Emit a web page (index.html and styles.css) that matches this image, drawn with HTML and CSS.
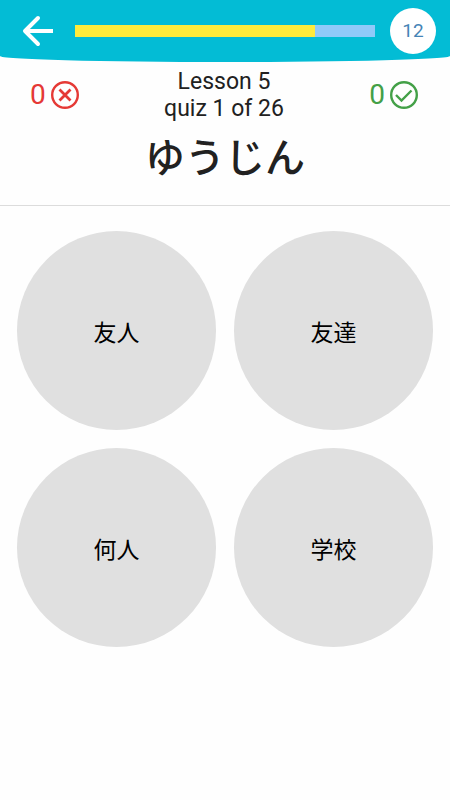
FILE: index.html
```html
<!DOCTYPE html>
<html lang="en">
<head>
    <meta charset="UTF-8">
    <meta name="viewport" content="width=device-width, initial-scale=1.0">
    <title>Lesson 5 Quiz</title>
    <link rel="stylesheet" href="styles.css">
</head>
<body>
    <header class="top-bar">
        <button class="back" type="button" aria-label="Back">
            <svg viewBox="0 0 34 34" width="34" height="34">
                <path stroke-linecap="butt" d="M31 17H3" />
                <path d="M16 4L3 17l13 13" />
            </svg>
        </button>
        <div class="progress" role="progressbar" aria-label="Time left" aria-valuenow="12" aria-valuemin="0" aria-valuemax="15">
            <div class="progress-fill" style="width: 80%"></div>
        </div>
        <div class="timer">12</div>
    </header>

    <section class="question">
        <div class="status">
            <div class="score wrong">
                <span>0</span>
                <svg viewBox="0 0 28 28" width="28" height="28">
                    <circle cx="14" cy="14" r="12.8" />
                    <path class="cross" d="M8.500 8.500l11 11M19.500 8.500l-11 11" />
                </svg>
            </div>
            <div class="lesson">
                <div>Lesson 5</div>
                <div>quiz 1 of 26</div>
            </div>
            <div class="score right">
                <span>0</span>
                <svg viewBox="0 0 28 28" width="28" height="28">
                    <circle cx="14" cy="14" r="12.8" />
                    <path d="M6 14l5.500 5.500L21.500 9.500" />
                </svg>
            </div>
        </div>
        <h1 class="word" lang="ja">ゆうじん</h1>
    </section>

    <main class="answers" lang="ja">
        <button class="answer" type="button">友人</button>
        <button class="answer" type="button">友達</button>
        <button class="answer" type="button">何人</button>
        <button class="answer" type="button">学校</button>
    </main>
</body>
</html>
```

FILE: styles.css
```css
body {
    margin: 0;
    font-family: Roboto, "Noto Sans CJK JP", sans-serif;
    background-color: #fefefe;
    color: #212121;
}
button {
    border: none;
    padding: 0;
    cursor: pointer;
}
svg {
    display: block;
    fill: none;
    stroke: currentColor;
}
.top-bar {
    display: flex;
    align-items: center;
    gap: 15px;
    padding: 8px 14px 8px 18px;
    background-color: #03bcd5;
    border-radius: 0 0 50% 50% / 0 0 6px 6px;
}
.back {
    display: flex;
    justify-content: center;
    align-items: center;
    width: 42px;
    height: 42px;
    background: none;
    color: white;
}
.back svg {
    stroke-width: 4;
    stroke-linecap: round;
    stroke-linejoin: round;
}
.progress {
    flex: 1;
    height: 12px;
    background-color: #90caf9;
}
.progress-fill {
    height: 100%;
    background-color: #ffeb3b;
}
.timer {
    width: 46px;
    height: 46px;
    border-radius: 50%;
    background-color: white;
    color: #4584b6;
    font-size: 19px;
    line-height: 46px;
    text-align: center;
}
.question {
    padding-bottom: 22px;
    border-bottom: 1px solid #dcdcdc;
}
.status {
    display: flex;
    justify-content: space-between;
    align-items: center;
    padding: 6px 32px 0 30px;
}
.score {
    display: flex;
    align-items: center;
    gap: 5px;
    font-size: 28px;
    line-height: 28px;
}
.score svg {
    stroke-width: 2.4;
}
.wrong {
    color: #e53935;
}
.wrong .cross {
    stroke-width: 2.8;
}
.right {
    color: #43a047;
}
.lesson {
    font-size: 23px;
    line-height: 27px;
    text-align: center;
}
.word {
    margin: 5px 0 0;
    font-size: 40px;
    line-height: 56px;
    font-weight: 500;
    font-family: "Noto Sans CJK JP", sans-serif;
    text-align: center;
}
.answers {
    display: grid;
    grid-template-columns: 1fr 1fr;
    gap: 18px;
    padding: 25px 17px;
}
.answer {
    aspect-ratio: 1;
    border-radius: 50%;
    background-color: #e0e0e0;
    color: black;
    font-family: "Noto Sans CJK JP", sans-serif;
    font-size: 23px;
}
```
